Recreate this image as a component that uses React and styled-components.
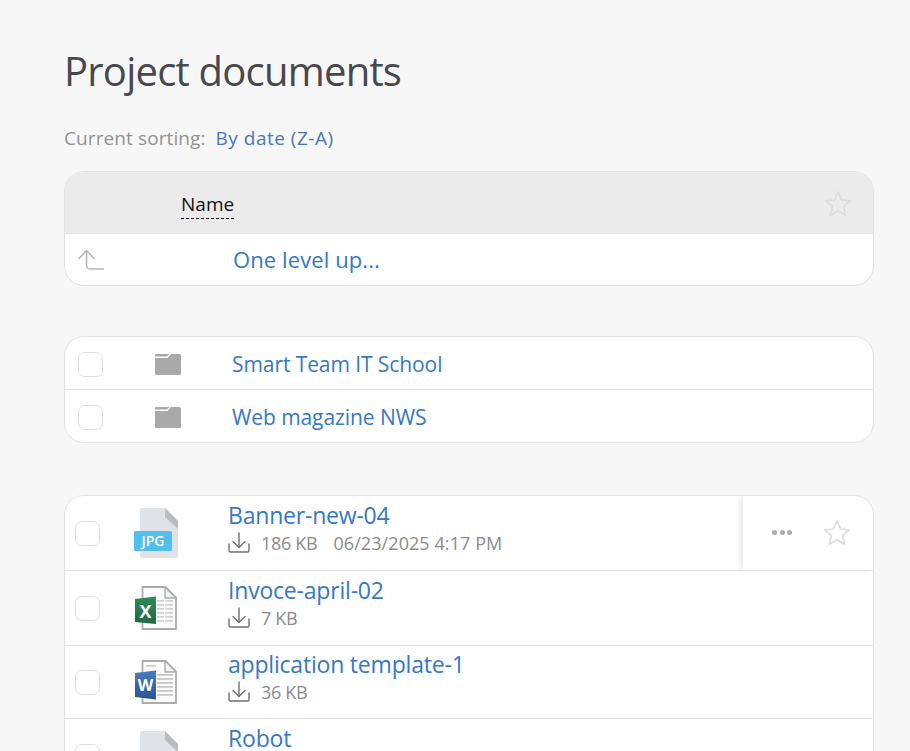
import React from 'react';
import styled, { createGlobalStyle } from 'styled-components';

const GlobalStyle = createGlobalStyle`
  html, body {
    margin: 0;
    height: 100%;
    overflow: hidden;
    background-color: #f7f7f7;
  }
  body {
    font-family: "Open Sans", "Noto Sans", sans-serif;
  }
`;

const Page = styled.div`
  width: 810px;
  padding: 45px 36px 0 64px;
`;

const Title = styled.h1`
  margin: 0;
  font-size: 40px;
  line-height: 52px;
  font-weight: 400;
  color: #48484c;
  letter-spacing: -0.78px;
`;

const SortLine = styled.div`
  display: flex;
  gap: 10px;
  margin-top: 29px;
  font-size: 19px;
  line-height: 24px;
  letter-spacing: 0.1px;
  color: #929292;
`;

const SortValue = styled.span`
  color: #4a76b8;
  letter-spacing: 0.5px;
`;

const Card = styled.div`
  background-color: #fff;
  border: 1px solid #e2e2e2;
  border-radius: 20px;
  overflow: hidden;
  margin-top: ${props => props.$top}px;
`;

const HeaderRow = styled.div`
  display: flex;
  align-items: center;
  justify-content: space-between;
  height: 60px;
  padding: 1px 21px 0 116px;
  background-color: #ebebeb;
  border-bottom: 1px solid #e2e2e2;
`;

const HeaderLabel = styled.span`
  margin-top: 3px;
  font-size: 19px;
  line-height: 28px;
  letter-spacing: 0.05px;
  color: #111;
  border-bottom: 1px dashed #111;
`;

const UpRow = styled.div`
  display: flex;
  align-items: center;
  height: 51px;
  padding-left: 13px;
`;

const UpLink = styled.a`
  margin: -1px 0 0 129px;
  font-size: 22px;
  letter-spacing: 0.1px;
  color: #3578c6;
`;

const FolderRow = styled.div`
  display: flex;
  align-items: center;
  height: 50px;
  padding: 2px 0 0 13px;
  & + & {
    border-top: 1px solid #e2e2e2;
  }
`;

const Checkbox = styled.span`
  display: block;
  flex: none;
  width: 25px;
  height: 25px;
  box-sizing: border-box;
  background-color: #fff;
  border: 1px solid #dedede;
  border-radius: 7px;
`;

const FolderIconCell = styled.div`
  display: flex;
  flex: none;
  margin: 0 51px 0 52px;
`;

const FolderName = styled.a`
  font-size: 21px;
  letter-spacing: -0.08px;
  color: #3578c6;
`;

const FileRow = styled.div`
  position: relative;
  display: flex;
  align-items: center;
  flex: none;
  height: ${props => props.$height}px;
  padding-left: 10px;
  & + & {
    border-top: 1px solid #e2e2e2;
  }
`;

const FileIconCell = styled.div`
  display: flex;
  justify-content: center;
  flex: none;
  width: 44px;
  margin: 0 50px 0 34px;
`;

const FileInfo = styled.div`
  display: flex;
  flex-direction: column;
  margin-top: -13px;
`;

const FileName = styled.a`
  font-size: 23px;
  line-height: 32px;
  letter-spacing: -0.2px;
  color: #3578c6;
`;

const FileMeta = styled.div`
  display: flex;
  align-items: center;
  gap: 11px;
  height: 24px;
  font-size: 18px;
  color: #8b8b8b;
`;

const MetaSize = styled.span`
  letter-spacing: -0.3px;
`;

const MetaDate = styled.span`
  margin-left: 5px;
  letter-spacing: 0.08px;
`;

const RowActions = styled.div`
  position: absolute;
  top: 0;
  right: 0;
  bottom: 0;
  display: flex;
  align-items: center;
  gap: 31px;
  width: 130px;
  padding: 0 0 2px 29px;
  box-sizing: border-box;
  background-color: #fff;
  box-shadow: -3px 0 5px rgba(0, 0, 0, 0.09);
`;

const MoreDots = styled.span`
  display: flex;
  gap: 2.5px;
`;

const Dot = styled.i`
  width: 5px;
  height: 5px;
  border-radius: 50%;
  background-color: #ababab;
`;

const StarIcon = () => (
  <svg width="28" height="27" viewBox="0 0 28 27" fill="none" stroke="#dcdcdc" strokeWidth="1.7" strokeLinejoin="round">
    <path d="M14 2l3.6 8 8.6.9-6.5 5.8 1.9 8.5L14 20.8l-7.6 4.4 1.9-8.5-6.5-5.8 8.6-.9z" />
  </svg>
);

const UpIcon = () => (
  <svg width="26" height="22" viewBox="0 0 26 22" fill="none" stroke="#b7b7b7" strokeWidth="1.6" strokeLinecap="round" strokeLinejoin="round">
    <path d="M1 9.5L8.5 1.5 16 9.5" />
    <path d="M8.5 1.5V16a4 4 0 0 0 4 4H25.5" />
  </svg>
);

const FolderIcon = () => (
  <svg width="26" height="21" viewBox="0 0 26 21">
    <path d="M1 0h13.5l-2.5 2.5H0V1a1 1 0 0 1 1-1z" fill="#a9a9a9" />
    <path d="M16 0h8.5A1.500 1.500 0 0 1 26 1.500v18a1.500 1.500 0 0 1-1.500 1.500h-23A1.500 1.500 0 0 1 0 19.500V4h12.500z" fill="#a9a9a9" />
  </svg>
);

const DownloadIcon = () => (
  <svg width="22" height="21" viewBox="0 0 22 21" fill="none" stroke="#6f6f6f" strokeWidth="1.4" strokeLinecap="round" strokeLinejoin="round">
    <path d="M11 1v14" />
    <path d="M5 9.500l6 6 6-6" />
    <path d="M1 12v6.500a1.500 1.500 0 0 0 1.500 1.500h17a1.500 1.500 0 0 0 1.500-1.500V12" />
  </svg>
);

const ImageFileIcon = () => (
  <svg width="44" height="50" viewBox="0 0 44 50">
    <path d="M8 0h23l13 13v35a2 2 0 0 1-2 2H8a2 2 0 0 1-2-2V2a2 2 0 0 1 2-2z" fill="#dfe3e8" />
    <path d="M31 0l13 13v8L31 9z" fill="#b6bcc3" />
    <rect x="0" y="23" width="38" height="20" rx="1.500" fill="#4fc0ee" />
    <text x="19" y="38" textAnchor="middle" fontFamily="Open Sans, sans-serif" fontSize="14" fontWeight="600" fill="#fff">JPG</text>
  </svg>
);

const DocLines = ({ from, to, x, color }) => {
  const lines = [];
  for (let y = from; y <= to; y += 4) {
    lines.push(<rect key={y} x={x} y={y} width={38 - x} height="1.800" fill={color} />);
  }
  return lines;
};

const DocSheet = () => (
  <>
    <path d="M7.500 1h23L41 11.500V43H7.500z" fill="#fbfbfb" stroke="#acacac" strokeWidth="1.800" />
    <path d="M30 1v11h11z" fill="#f2f2f2" stroke="#acacac" strokeWidth="1.400" strokeLinejoin="round" />
  </>
);

const ExcelIcon = () => (
  <svg width="42" height="44" viewBox="0 0 42 44">
    <defs>
      <linearGradient id="xlsBlock" x1="0" y1="0" x2="0" y2="1">
        <stop offset="0" stopColor="#2f8a58" />
        <stop offset="1" stopColor="#1f6a40" />
      </linearGradient>
    </defs>
    <DocSheet />
    <DocLines from={14} to={34} x={22} color="#ccd3d3" />
    <rect x="29" y="13" width="1.200" height="24" fill="#fbfbfb" />
    <path d="M0 13l21-2.500V38L0 36z" fill="url(#xlsBlock)" />
    <text x="10.500" y="32" textAnchor="middle" fontFamily="Open Sans, sans-serif" fontSize="18" fontWeight="700" fill="#fff">X</text>
  </svg>
);

const WordIcon = () => (
  <svg width="42" height="44" viewBox="0 0 42 44">
    <defs>
      <linearGradient id="docBlock" x1="0" y1="0" x2="0" y2="1">
        <stop offset="0" stopColor="#4a7cc0" />
        <stop offset="1" stopColor="#2a5294" />
      </linearGradient>
    </defs>
    <DocSheet />
    <rect x="11" y="5" width="10" height="1.600" fill="#c6c6c6" />
    <DocLines from={14} to={36} x={22} color="#c6c6c6" />
    <path d="M0 13l21-2.500V39.500L0 37z" fill="url(#docBlock)" />
    <text x="10.500" y="31" textAnchor="middle" fontFamily="Open Sans, sans-serif" fontSize="16" fontWeight="700" fill="#fff">W</text>
  </svg>
);

const folders = ['Smart Team IT School', 'Web magazine NWS'];

const files = [
  { name: 'Banner-new-04', size: '186 KB', date: '06/23/2025 4:17 PM', icon: <ImageFileIcon />, height: 74, active: true },
  { name: 'Invoce-april-02', size: '7 KB', icon: <ExcelIcon />, height: 74 },
  { name: 'application template-1', size: '36 KB', icon: <WordIcon />, height: 72 },
  { name: 'Robot', size: '', icon: <ImageFileIcon />, height: 74 },
];

export default function App() {
  return (
    <Page>
      <GlobalStyle />
      <Title>Project documents</Title>
      <SortLine>
        <span>Current sorting:</span>
        <SortValue>By date (Z-A)</SortValue>
      </SortLine>

      <Card $top={21}>
        <HeaderRow>
          <HeaderLabel>Name</HeaderLabel>
          <StarIcon />
        </HeaderRow>
        <UpRow>
          <UpIcon />
          <UpLink>One level up...</UpLink>
        </UpRow>
      </Card>

      <Card $top={50}>
        {folders.map(name => (
          <FolderRow key={name}>
            <Checkbox />
            <FolderIconCell>
              <FolderIcon />
            </FolderIconCell>
            <FolderName>{name}</FolderName>
          </FolderRow>
        ))}
      </Card>

      <Card $top={52}>
        {files.map(file => (
          <FileRow key={file.name} $height={file.height}>
            <Checkbox />
            <FileIconCell>{file.icon}</FileIconCell>
            <FileInfo>
              <FileName>{file.name}</FileName>
              <FileMeta>
                <DownloadIcon />
                <MetaSize>{file.size}</MetaSize>
                {file.date && <MetaDate>{file.date}</MetaDate>}
              </FileMeta>
            </FileInfo>
            {file.active && (
              <RowActions>
                <MoreDots>
                  <Dot />
                  <Dot />
                  <Dot />
                </MoreDots>
                <StarIcon />
              </RowActions>
            )}
          </FileRow>
        ))}
      </Card>
    </Page>
  );
}
